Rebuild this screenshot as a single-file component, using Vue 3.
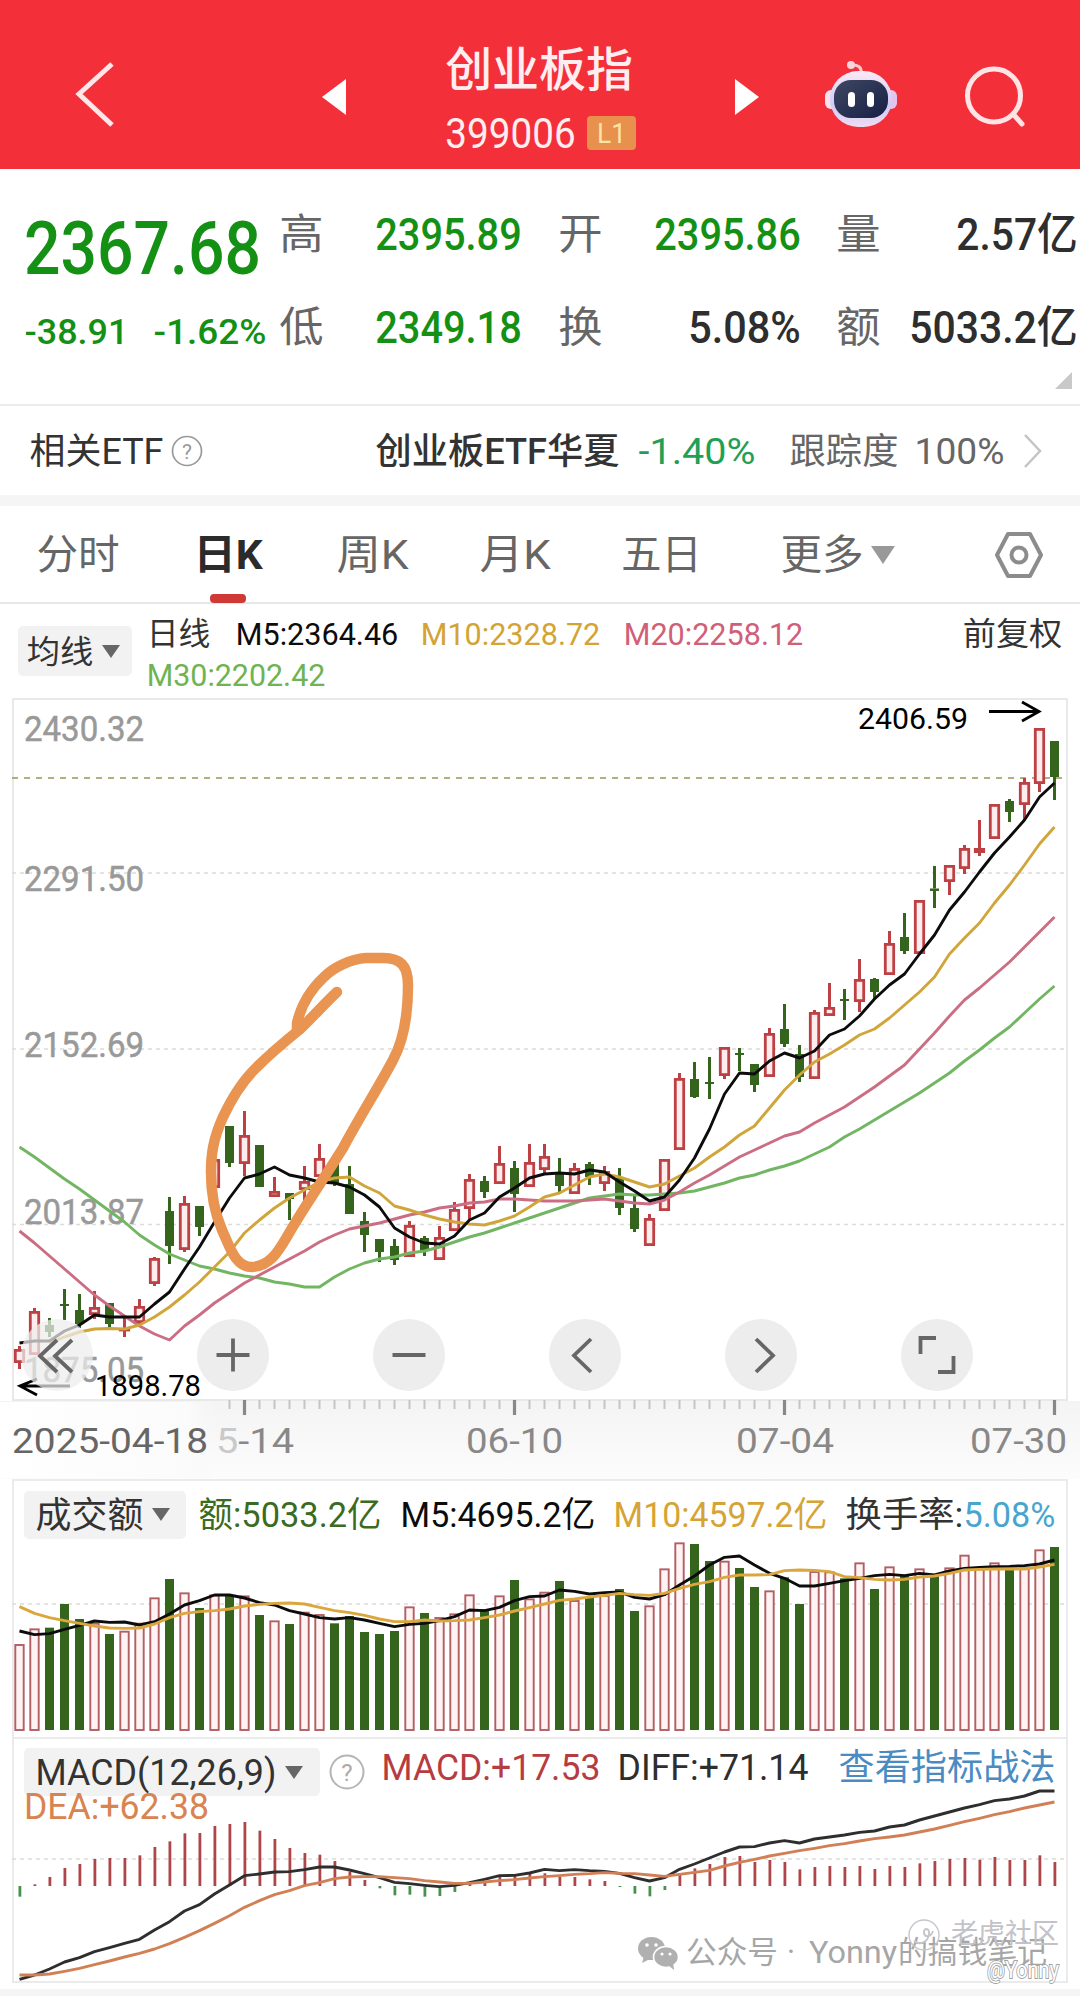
<template>
  <div class="page">
    <header class="topbar">
      <svg class="topbar__back" width="50" height="70" viewBox="0 0 50 70">
        <path d="M42 5 9 35l33 31" />
      </svg>
      <svg class="topbar__arrow" width="24" height="36" viewBox="0 0 24 36"><path d="M24 0v36L0 18z" /></svg>
      <div class="topbar__title">
        <FitText text="创业板指" :w="184" :size="47" class="medium" />
        <div class="topbar__code">
          <FitText text="399006" :w="127" :size="42" />
          <span class="badge"><FitText text="L1" :w="27" :size="28" /></span>
        </div>
      </div>
      <svg class="topbar__arrow topbar__arrow--next" width="24" height="36" viewBox="0 0 24 36"><path d="M0 0v36l24-18z" /></svg>
      <svg class="topbar__robot" width="72" height="70" viewBox="0 0 72 70">
        <defs>
          <linearGradient id="shell" x1="0" y1="0" x2="0" y2="1">
            <stop offset="0" stop-color="#fbe9f5" />
            <stop offset="0.6" stop-color="#cfcaf8" />
            <stop offset="1" stop-color="#eedcf2" />
          </linearGradient>
          <linearGradient id="visor" x1="0" y1="0" x2="1" y2="1">
            <stop offset="0" stop-color="#3f4763" />
            <stop offset="1" stop-color="#172044" />
          </linearGradient>
        </defs>
        <path d="M36 13c1-6-3-8-9-8" fill="none" stroke="#fbc9d3" stroke-width="3" />
        <circle cx="26" cy="5" r="4" fill="#fbd3dc" />
        <rect x="0" y="30" width="14" height="19" rx="6" fill="#f6e1ef" />
        <rect x="58" y="30" width="14" height="19" rx="6" fill="#e3c4ea" />
        <rect x="5" y="11" width="62" height="56" rx="28" fill="url(#shell)" />
        <rect x="9" y="20" width="54" height="38" rx="17" fill="url(#visor)" />
        <rect x="23" y="32" width="7" height="15" rx="3.5" fill="#fff" />
        <rect x="42" y="32" width="7" height="15" rx="3.5" fill="#fff" />
      </svg>
      <svg class="topbar__search" width="62" height="62" viewBox="0 0 62 62">
        <circle cx="29" cy="30.5" r="26.5" />
        <path d="m48 49 9 10" />
      </svg>
    </header>

    <section class="quote">
      <div class="quote__main">
        <div class="quote__price"><FitText text="2367.68" :w="231" :size="75" class="medium" /></div>
        <div class="quote__change">
          <FitText text="-38.91" :w="101" :size="35" class="medium" />
          <FitText text="-1.62%" :w="110" :size="35" class="medium" />
        </div>
      </div>
      <div class="quote__grid">
        <template v-for="s in stats" :key="s.label">
          <FitText class="quote__label" :text="s.label" :w="41" :size="42" />
          <FitText class="quote__value medium" :class="{ down: s.down }" :text="s.value" :w="s.w" :size="44" />
        </template>
      </div>
      <i class="quote__corner"></i>
    </section>

    <section class="etf">
      <FitText text="相关ETF" :w="131" :size="36" />
      <svg class="etf__help" width="32" height="32" viewBox="0 0 32 32">
        <circle cx="16" cy="16" r="14.5" fill="none" stroke="#999" stroke-width="1.7" />
        <text x="16" y="23.5" text-anchor="middle" font-size="21" fill="#999">?</text>
      </svg>
      <FitText class="etf__name medium" text="创业板ETF华夏" :w="241" :size="36" />
      <FitText class="etf__pct" text="-1.40%" :w="114" :size="37" />
      <FitText class="etf__track" text="跟踪度" :w="106" :size="36" />
      <FitText class="etf__full" text="100%" :w="87" :size="36" />
      <svg class="etf__more" width="18" height="34" viewBox="0 0 18 34"><path d="m1 1 15 16L1 33" /></svg>
    </section>

    <nav class="tabs">
      <div v-for="t in tabs" :key="t.text" class="tabs__item" :class="{ 'tabs__item--on': t.on }">
        <FitText :text="t.text" :w="t.w" :size="41" />
      </div>
      <i class="tabs__caret"></i>
      <svg class="tabs__gear" width="50" height="48" viewBox="0 0 50 48">
        <path d="M14 3h22l11 21-11 21H14L3 24z" />
        <circle cx="25" cy="24" r="7.5" />
      </svg>
    </nav>

    <section class="ma">
      <div class="pick ma__pick">
        <FitText text="均线" :w="64" :size="32" />
        <i class="caret"></i>
      </div>
      <div class="ma__legend">
        <FitText text="日线" :w="61" :size="32" class="ink" />
        <FitText class="ma__m5" text="M5:2364.46" :w="160" :size="32" />
        <FitText class="ma__m10" text="M10:2328.72" :w="177" :size="32" />
        <FitText class="ma__m20" text="M20:2258.12" :w="177" :size="32" />
        <FitText class="ma__adj ink" text="前复权" :w="97" :size="32" />
      </div>
      <FitText class="ma__m30" text="M30:2202.42" :w="176" :size="32" />
    </section>

    <!-- K line -->
    <svg class="kline" width="1080" height="781" viewBox="0 698 1080 781">
      <defs>
        <linearGradient id="axis" x1="0" y1="0" x2="0" y2="1">
          <stop offset="0" stop-color="#f4f4f4" />
          <stop offset="1" stop-color="#fcfcfc" />
        </linearGradient>
        <linearGradient id="fade" x1="0" y1="0" x2="1" y2="0">
          <stop offset="0" stop-color="#fff" />
          <stop offset="0.88" stop-color="#fbfbfb" />
          <stop offset="1" stop-color="#f8f8f8" stop-opacity="0" />
        </linearGradient>
      </defs>
      <rect x="13" y="699" width="1054" height="701" fill="#fff" stroke="#e9e9e9" stroke-width="2" />
      <path v-for="y in [873, 1049, 1224.5]" :key="y" class="grid" :d="`M12 ${y}H1066`" />
      <path d="M12 778H1062" stroke="#9a9558" stroke-width="1.6" stroke-dasharray="6 6" />

      <g class="scale">
        <text v-for="l in scale" :key="l.t" x="24" :y="l.y" textLength="120" lengthAdjust="spacingAndGlyphs">{{ l.t }}</text>
      </g>

      <g v-for="(c, i) in candles" :key="i" :class="c[0] === 'r' ? 'rise' : 'fall'">
        <path :d="`M${px(i)} ${c[1]}V${c[2]}M${px(i)} ${c[3]}V${c[4]}`" stroke-width="3" />
        <rect v-if="c[0] === 'r'" :x="px(i) - 4.2" :y="c[2] + 1.4" width="8.4" :height="Math.max(c[3] - c[2] - 2.8, 0.6)" stroke-width="2.8" />
        <rect v-else :x="px(i) - 4.5" :y="c[2]" width="9" :height="c[3] - c[2]" />
      </g>

      <polyline class="line" :points="line(ma30)" stroke="#72b562" />
      <polyline class="line" :points="line(ma20)" stroke="#cb6d83" />
      <polyline class="line" :points="line(ma10, 2)" stroke="#d0a53a" />
      <polyline class="line" :points="line(ma5)" stroke="#0c0c0c" />

      <path class="arrow" d="M989 711.5h50M1022 702l17 9.500-17 9.500M20 1386h50M37 1379l-17 7 17 9" />
      <text class="extreme" x="858" y="729" textLength="110" lengthAdjust="spacingAndGlyphs">2406.59</text>

      <g v-for="(b, i) in controls" :key="b" :transform="`translate(${57 + i * 176} 1355)`">
        <circle r="36" fill="#ededed" :opacity="i ? 1 : 0.72" />
        <path :d="b" fill="none" stroke="#666" stroke-width="3.8" />
      </g>
      <text class="extreme" x="95" y="1396" textLength="106" lengthAdjust="spacingAndGlyphs">1898.78</text>

      <!-- hand-drawn mark -->
      <path
        d="M337 992C326 1002 310 1020 299 1030C283 1043 269 1055 257 1067C240 1083 230 1102 223 1117C213 1139 211 1155 211 1172C211 1197 216 1216 222 1230C230 1247 235 1267 252 1267C271 1266 279 1250 288 1235C302 1210 325 1177 343 1148C360 1116 380 1085 393 1060C405 1038 408 1012 408 985C408 965 400 958 383 958H366C350 959 333 968 324 977C311 989 301 1006 297 1023V1031"
        fill="none" stroke="#e99451" stroke-width="10.5" stroke-linecap="round" stroke-linejoin="round"
      />

      <rect x="0" y="1401" width="1080" height="78" fill="url(#axis)" />
      <path v-for="i in ticks" :key="i" :d="`M${px(i)} 1400V${isMajor(i) ? 1415 : 1409}`" :stroke="isMajor(i) ? '#888' : '#c4c4c4'" :stroke-width="isMajor(i) ? 3.2 : 2" />
      <g class="dates">
        <text x="216" y="1453" textLength="78" lengthAdjust="spacingAndGlyphs"><tspan fill="#c9c9c9">5</tspan>-14</text>
        <text x="466" y="1453" textLength="97" lengthAdjust="spacingAndGlyphs">06-10</text>
        <text x="736" y="1453" textLength="98" lengthAdjust="spacingAndGlyphs">07-04</text>
        <text x="970" y="1453" textLength="97" lengthAdjust="spacingAndGlyphs">07-30</text>
        <rect x="0" y="1402" width="214" height="76" fill="url(#fade)" />
        <text x="12" y="1453" textLength="196" lengthAdjust="spacingAndGlyphs" fill="#666">2025-04-18</text>
      </g>
    </svg>

    <!-- turnover -->
    <section class="panel panel--vol">
      <div class="panel__head">
        <div class="pick vol__pick">
          <FitText text="成交额" :w="105" :size="36" />
          <i class="caret"></i>
        </div>
        <FitText class="vol__now" text="额:5033.2亿" :w="180" :size="35" />
        <FitText class="vol__m5" text="M5:4695.2亿" :w="192" :size="35" />
        <FitText class="vol__m10" text="M10:4597.2亿" :w="211" :size="35" />
        <FitText class="vol__rate ink" text="换手率:" :w="115" :size="35" />
        <FitText class="vol__pct" text="5.08%" :w="89" :size="35" />
      </div>
      <svg class="panel__svg" width="1054" height="196" viewBox="13 1540 1054 196">
        <path class="grid" d="M12 1604H1066" />
        <g v-for="(v, i) in volumes" :key="i">
          <rect v-if="candles[i][0] === 'r'" :x="px(i) - 4.2" :y="volY(v) + 1" width="8.4" :height="1729 - volY(v)" fill="#fff3f3" stroke="#b25f64" stroke-width="1.9" />
          <rect v-else :x="px(i) - 4.5" :y="volY(v)" width="9" :height="1730 - volY(v)" fill="#35651d" />
        </g>
        <polyline class="line" :points="line(volMa5.map(volY))" stroke="#0c0c0c" />
        <polyline class="line" :points="line(volMa10.map(volY))" stroke="#dba73d" />
      </svg>
    </section>

    <!-- MACD -->
    <section class="panel panel--macd">
      <div class="panel__head macd__head">
        <div class="pick macd__pick">
          <FitText text="MACD(12,26,9)" :w="238" :size="36" />
          <i class="caret"></i>
        </div>
        <svg class="macd__help" width="36" height="36" viewBox="0 0 36 36">
          <circle cx="18" cy="18" r="16.5" fill="none" stroke="#b5b5b5" stroke-width="2" />
          <text x="18" y="26.500" text-anchor="middle" font-size="24" fill="#aaa">?</text>
        </svg>
        <FitText class="macd__val" text="MACD:+17.53" :w="216" :size="36" />
        <FitText class="macd__diff" text="DIFF:+71.14" :w="188" :size="36" />
        <FitText class="macd__link" text="查看指标战法" :w="214" :size="36" />
      </div>
      <svg class="panel__svg" width="1054" height="186" viewBox="13 1795 1054 186">
        <path class="grid" d="M12 1859H1066" />
        <path v-for="(v, i) in macd" :key="i" :d="`M${px(i) + 0.4} 1886V${macdY(v)}`" :stroke="v > 468 ? '#47914a' : '#ad4549'" stroke-width="2.800" />
        <polyline class="line" :points="line(diff.map(macdY))" stroke="#2e2e2e" />
        <polyline class="line" :points="line(dea.map(macdY))" stroke="#d17f55" />
        <text class="dea" x="24" y="1819" textLength="185" lengthAdjust="spacingAndGlyphs">DEA:+62.38</text>

        <g fill="#b0b0b0">
          <ellipse cx="651.5" cy="1948.500" rx="13.5" ry="11.5" />
          <path d="m644 1956-2 7 8-4z" />
          <ellipse cx="666" cy="1957" rx="12.500" ry="10.500" stroke="#fff" stroke-width="1.600" />
          <path d="m668 1965 6 5-1-8z" />
        </g>
        <g fill="#fff">
          <circle cx="647" cy="1945" r="1.800" />
          <circle cx="656" cy="1945" r="1.800" />
          <circle cx="662" cy="1954" r="1.600" />
          <circle cx="670" cy="1954" r="1.600" />
        </g>
        <g class="mark" font-size="31">
          <text x="686" y="1963" textLength="92" lengthAdjust="spacingAndGlyphs">公众号</text>
          <text x="787" y="1963">·</text>
          <text x="809" y="1963" textLength="88" lengthAdjust="spacingAndGlyphs">Yonny</text>
          <text x="898" y="1963" textLength="149" lengthAdjust="spacingAndGlyphs">的搞钱笔记</text>
        </g>
        <g class="mark mark--light">
          <circle cx="924" cy="1935" r="15" fill="none" stroke="#c6c6cc" stroke-width="1.400" />
          <path d="M914 1941c6 5 14 1 15-7 1-7-6-6-5-1s7 4 9-2" fill="none" stroke="#c6c6cc" stroke-width="2" />
          <text x="951" y="1943" font-size="27" textLength="108" lengthAdjust="spacingAndGlyphs">老虎社区</text>
          <text class="mark__author" x="987" y="1978" font-size="23" textLength="72" lengthAdjust="spacingAndGlyphs">@Yonny</text>
        </g>
      </svg>
    </section>
  </div>
</template>

<script setup>
import { h } from 'vue';

// single line of text squeezed to a given width
const FitText = (props) => {
  const pad = props.size * 0.04;
  return h(
    'svg',
    { class: 'fit', width: props.w, height: props.size },
    [
      h(
        'text',
        {
          x: -pad,
          y: props.size * 0.86,
          'font-size': props.size,
          fill: 'currentColor',
          textLength: props.w + pad * 2,
          lengthAdjust: 'spacingAndGlyphs'
        },
        props.text
      )
    ]
  );
};
FitText.props = ['text', 'w', 'size'];

const stats = [
  { label: '高', value: '2395.89', w: 143, down: true },
  { label: '开', value: '2395.86', w: 143, down: true },
  { label: '量', value: '2.57亿', w: 118 },
  { label: '低', value: '2349.18', w: 143, down: true },
  { label: '换', value: '5.08%', w: 109 },
  { label: '额', value: '5033.2亿', w: 165 }
];

const tabs = [
  { text: '分时', w: 80 },
  { text: '日K', w: 66, on: true },
  { text: '周K', w: 69 },
  { text: '月K', w: 68 },
  { text: '五日', w: 77 },
  { text: '更多', w: 80 }
];

const scale = [
  { t: '2430.32', y: 741 },
  { t: '2291.50', y: 891 },
  { t: '2152.69', y: 1057 },
  { t: '2013.87', y: 1224 },
  { t: '1875.05', y: 1382 }
];

const controls = [
  'M15-15-2 1l17 16M0-15-17 1 0 17',
  'M-16.5 0h33M0-16.500v33',
  'M-16.500 0h33',
  'M6-16-11 .5 6 17',
  'M-5-16 12 .5-5 17',
  'M-1-17h-15.500v16M16.500 1v16H1'
];

// [type, high, bodyTop, bodyBottom, low]
const candles = [
  ['r', 1346, 1349, 1363, 1369], ['r', 1308, 1311, 1355, 1355], ['g', 1318, 1325, 1332, 1337],
  ['g', 1289, 1304, 1306, 1320], ['g', 1294, 1310, 1324, 1328], ['r', 1291, 1307, 1315, 1319],
  ['g', 1303, 1303, 1324, 1328], ['r', 1317, 1328, 1331, 1337], ['r', 1299, 1306, 1323, 1324],
  ['r', 1257, 1258, 1284, 1286], ['g', 1197, 1211, 1246, 1264], ['r', 1196, 1203, 1250, 1252],
  ['g', 1206, 1206, 1227, 1236], ['r', 1159, 1159, 1188, 1188], ['g', 1126, 1126, 1163, 1167],
  ['r', 1111, 1135, 1164, 1176], ['g', 1145, 1145, 1187, 1187], ['r', 1177, 1191, 1197, 1197],
  ['g', 1193, 1193, 1199, 1220], ['r', 1166, 1181, 1190, 1203], ['r', 1144, 1158, 1177, 1178],
  ['g', 1159, 1159, 1183, 1186], ['g', 1166, 1184, 1214, 1214], ['g', 1212, 1221, 1235, 1252],
  ['g', 1239, 1239, 1252, 1262], ['g', 1239, 1246, 1260, 1265], ['r', 1221, 1225, 1257, 1257],
  ['g', 1236, 1238, 1251, 1256], ['r', 1226, 1237, 1260, 1260], ['r', 1202, 1209, 1231, 1231],
  ['r', 1174, 1179, 1209, 1220], ['g', 1176, 1181, 1192, 1198], ['r', 1146, 1163, 1184, 1184],
  ['g', 1161, 1168, 1194, 1212], ['r', 1144, 1162, 1187, 1187], ['r', 1144, 1156, 1170, 1175],
  ['g', 1158, 1173, 1186, 1194], ['r', 1163, 1168, 1194, 1194], ['g', 1162, 1164, 1177, 1185],
  ['r', 1166, 1171, 1184, 1191], ['g', 1168, 1178, 1208, 1215], ['g', 1196, 1208, 1229, 1232],
  ['r', 1214, 1218, 1246, 1246], ['r', 1159, 1159, 1211, 1211], ['r', 1073, 1078, 1150, 1150],
  ['g', 1062, 1079, 1097, 1098], ['g', 1057, 1082, 1084, 1099], ['r', 1047, 1047, 1076, 1079],
  ['g', 1048, 1053, 1055, 1071], ['g', 1064, 1064, 1085, 1092], ['r', 1028, 1033, 1077, 1077],
  ['g', 1004, 1029, 1044, 1047], ['g', 1045, 1054, 1077, 1082], ['r', 1010, 1012, 1079, 1079],
  ['r', 983, 1007, 1016, 1016], ['g', 989, 999, 1001, 1020], ['r', 959, 979, 1002, 1012],
  ['g', 978, 979, 992, 999], ['r', 931, 943, 975, 975], ['g', 913, 937, 951, 954],
  ['r', 900, 900, 954, 954], ['g', 866, 888.5, 891, 908], ['r', 865, 865, 882, 895],
  ['r', 845, 848, 869, 874], ['r', 820, 848, 853, 856], ['r', 804, 804, 839, 839],
  ['g', 799, 801, 812, 822], ['r', 778, 782, 805, 820], ['r', 728, 728, 784, 792],
  ['g', 741, 741, 777, 800]
];

const ma5 = [
  1343, 1341, 1341, 1331, 1325, 1315, 1317, 1317, 1317, 1304, 1292, 1269, 1247, 1222, 1198, 1178, 1174, 1167, 1175, 1178,
  1182, 1183, 1187, 1195, 1207, 1228, 1237, 1243, 1244, 1236, 1220, 1213, 1197, 1188, 1178, 1174, 1173, 1174, 1170, 1172,
  1182, 1191, 1201, 1197, 1180, 1158, 1129, 1094, 1073, 1074, 1061, 1053, 1058, 1051, 1035, 1029, 1016, 999, 985, 974,
  954, 935, 910, 892, 872, 853, 837, 820, 797, 783
];
const ma10 = [
  1343, 1337, 1332, 1329, 1328.5, 1329, 1325, 1317, 1307, 1295, 1282, 1267, 1252, 1233, 1220, 1208, 1198, 1190,
  1182, 1178, 1177, 1186, 1193, 1206, 1210, 1215, 1219, 1222, 1224, 1225, 1221, 1216, 1207, 1197, 1193, 1185, 1177, 1174,
  1177, 1182, 1187, 1184, 1176, 1168, 1157, 1147, 1135, 1126, 1108, 1090, 1075, 1062, 1054, 1045, 1035, 1029, 1018, 1005,
  992, 977, 954, 938, 923, 903, 885, 865, 844, 827
];
const ma20 = [
  1231, 1243, 1256, 1269, 1282, 1295, 1306, 1316, 1326, 1334, 1340, 1326, 1315, 1303, 1293, 1283, 1275, 1267, 1259, 1251,
  1242, 1235, 1229, 1226, 1223, 1219, 1215, 1212, 1208, 1206, 1203, 1202, 1199, 1199, 1200, 1201, 1201, 1201, 1200, 1199,
  1201, 1203, 1204, 1200, 1192, 1183, 1175, 1166, 1157, 1150, 1143, 1136, 1132, 1123, 1115, 1107, 1097, 1087, 1076, 1065,
  1049, 1033, 1016, 1000, 988, 975, 962, 947, 932, 917
];
const ma30 = [
  1147, 1157, 1168, 1179, 1189, 1200, 1211, 1222, 1235, 1245, 1254, 1260, 1266, 1269, 1273, 1276, 1278, 1282, 1284, 1287,
  1287, 1277, 1269, 1263, 1259, 1257, 1253, 1251, 1247, 1242, 1237, 1233, 1228, 1223, 1218, 1213, 1208, 1203, 1198, 1196,
  1194, 1195, 1195, 1194, 1193, 1191, 1187, 1183, 1178, 1175, 1170, 1166, 1161, 1154, 1147, 1137, 1129, 1120, 1111, 1102,
  1093, 1083, 1073, 1061, 1050, 1038, 1027, 1013, 999, 986
];

const volumes = [
  522, 475, 473, 402, 447, 458, 492, 482, 458, 382, 327, 367, 414, 373, 376, 376, 435, 451, 462, 425,
  432, 460, 438, 486, 492, 483, 409, 429, 441, 430, 373, 418, 376, 330, 385, 365, 333, 390, 380, 375,
  357, 423, 406, 295, 217, 222, 273, 272, 294, 351, 361, 322, 402, 303, 304, 325, 277, 357, 289, 315,
  295, 315, 292, 254, 295, 277, 300, 292, 238, 231
];
const volMa5 = [
  483, 494, 491, 478, 466, 453, 457, 456, 465, 455, 432, 405, 392, 375, 375, 384, 398, 405, 422, 432,
  443, 447, 443, 450, 460, 470, 463, 460, 452, 440, 420, 422, 412, 392, 380, 378, 360, 364, 372, 368,
  366, 382, 387, 374, 345, 318, 285, 262, 258, 285, 310, 325, 348, 348, 340, 332, 325, 317, 313, 317,
  310, 315, 303, 295, 292, 290, 289, 287, 282, 270
];
const volMa10 = [
  410, 430, 443, 452, 460, 468, 474, 475, 474, 462, 443, 430, 425, 422, 417, 408, 403, 400, 399, 402,
  412, 422, 428, 436, 447, 455, 455, 450, 453, 452, 450, 443, 435, 423, 413, 402, 391, 387, 381, 376,
  370, 374, 376, 370, 355, 343, 335, 322, 315, 315, 314, 302, 300, 301, 305, 320, 323, 328, 330, 328,
  321, 318, 310, 300, 298, 297, 297, 297, 291, 283
];

const macd = [
  500, 463, 441, 414, 402, 387, 384, 384, 376, 351, 334, 310, 309, 288, 282, 276, 302, 327, 354, 369,
  374, 393, 425, 450, 475, 496, 494, 500, 498, 486, 462, 455, 440, 437, 432, 430, 440, 441, 448, 453,
  471, 491, 499, 480, 435, 415, 402, 381, 378, 396, 390, 396, 418, 411, 408, 411, 408, 417, 408, 411,
  400, 393, 387, 384, 389, 381, 390, 390, 376, 396
];
const diff = [
  748, 735, 717, 696, 683, 665, 653, 640, 628, 600, 575, 543, 524, 492, 465, 437, 432, 426, 425, 419,
  411, 411, 420, 431, 443, 457, 461, 466, 470, 466, 458, 448, 437, 436, 429, 418, 422, 419, 422, 424,
  430, 443, 453, 443, 418, 402, 384, 366, 351, 350, 339, 332, 339, 327, 321, 315, 307, 303, 291, 285,
  270, 258, 246, 234, 224, 212, 207, 198, 183, 183
];
const dea = [
  735, 735, 732, 724, 715, 704, 693, 681, 670, 657, 641, 622, 602, 580, 557, 532, 512, 494, 482, 467,
  458, 446, 441, 440, 440, 443, 446, 452, 456, 460, 460, 456, 452, 449, 444, 440, 437, 433, 431, 428,
  430, 431, 435, 439, 433, 427, 421, 408, 397, 388, 378, 370, 362, 355, 347, 341, 333, 326, 321, 315,
  306, 297, 286, 275, 265, 254, 245, 234, 225, 216
];

const px = (i) => 19.5 + i * 15;
const volY = (v) => 1470 + v / 3;
const macdY = (v) => 1730 + v / 3;
const line = (ys, from = 0) => ys.map((y, i) => `${px(i + from)},${y}`).join(' ');

const ticks = Array.from({ length: 56 }, (_, i) => i + 14);
const isMajor = (i) => (i - 15) % 18 === 0;
</script>

<style>
body {
  background: #fff;
}
</style>

<style scoped>
.page {
  width: 1080px;
  height: 1996px;
  overflow: hidden;
  background: #fff;
  color: #333;
  font-family: Roboto, "Noto Sans CJK SC", sans-serif;
  display: flex;
  flex-direction: column;
}

.page > * {
  flex-shrink: 0;
  box-sizing: border-box;
}

.fit {
  display: block;
  flex-shrink: 0;
  overflow: visible;
}

.medium {
  font-weight: 500;
}

.ink {
  color: #333;
}

/* header */
.topbar {
  height: 169px;
  display: flex;
  align-items: flex-start;
  background: #f3303a;
  color: #ffeef0;
}

.topbar__back {
  margin: 59px 0 0 70px;
  fill: none;
  stroke: #ffe6e8;
  stroke-width: 5;
}

.topbar__arrow {
  margin: 79px 0 0 202px;
  fill: #fff;
}

.topbar__title {
  width: 190px;
  margin: 46px 0 0 101px;
}

.topbar__code {
  display: flex;
  align-items: center;
  gap: 13px;
  margin-top: 19px;
}

.badge {
  width: 49px;
  height: 34px;
  border-radius: 4px;
  background: #e8904d;
  color: #fde3a5;
  display: flex;
  align-items: center;
  justify-content: center;
}

.topbar__arrow--next {
  margin-left: 98px;
}

.topbar__robot {
  margin: 60px 0 0 66px;
}

.topbar__search {
  margin: 65px 0 0 67.500px;
  fill: none;
  stroke: #ffe4e6;
  stroke-width: 5;
  stroke-linecap: round;
}

/* quote */
.quote {
  position: relative;
  height: 235px;
  display: flex;
  padding-left: 26px;
}

.quote__main {
  width: 217px;
  padding-top: 35px;
  color: #149014;
}

.quote__price,
.quote__change {
  height: 85px;
  display: flex;
  align-items: center;
}

.quote__price {
  padding-left: 1px;
}

.quote__change {
  gap: 28px;
}

.quote__grid {
  display: grid;
  grid-template-columns: 79px 198px 81px 198px 80px 197px;
  grid-template-rows: 93px 93px;
  align-items: center;
  padding-top: 18px;
}

.quote__label {
  justify-self: end;
  color: #666;
}

.quote__value {
  justify-self: end;
  color: #2e2e2e;
}

.quote__value.down {
  color: #149014;
}

.quote__corner {
  position: absolute;
  right: 8px;
  bottom: 15px;
  border-left: 17px solid transparent;
  border-bottom: 17px solid #c9c9c9;
}

/* related ETF */
.etf {
  height: 102px;
  border-top: 2px solid #ededed;
  border-bottom: 11px solid #f5f5f5;
  display: flex;
  align-items: center;
  padding-left: 31px;
}

.etf__help {
  margin-left: 9px;
}

.etf__name {
  margin-left: 174px;
}

.etf__pct {
  margin-left: 22px;
  color: #1fa055;
}

.etf__track {
  margin-left: 37px;
  color: #666;
}

.etf__full {
  margin-left: 19px;
  color: #666;
}

.etf__more {
  margin-left: 21px;
  fill: none;
  stroke: #c4c4c4;
  stroke-width: 2.500;
}

/* tabs */
.tabs {
  height: 98px;
  display: flex;
  align-items: stretch;
  padding: 1px 0 0 38px;
  border-bottom: 2px solid #e8e8e8;
  color: #666;
}

.tabs__item {
  position: relative;
  display: flex;
  align-items: center;
  margin-right: 74px;
}

.tabs__item:nth-child(1),
.tabs__item:nth-child(2) {
  margin-right: 77px;
}

.tabs__item:nth-child(5) {
  margin-right: 82px;
}

.tabs__item:nth-child(6) {
  margin-right: 9px;
}

.tabs__item--on {
  color: #2b2b2b;
  font-weight: 700;
}

.tabs__item--on::after {
  content: '';
  position: absolute;
  left: 15px;
  bottom: -1px;
  width: 36px;
  height: 9px;
  border-radius: 4px;
  background: #cf3a37;
}

.tabs__caret {
  align-self: center;
  border: 12px solid transparent;
  border-top: 18px solid #999;
  border-bottom: 0;
}

.tabs__gear {
  align-self: center;
  margin-left: 99px;
  fill: none;
  stroke: #8c8c8c;
  stroke-width: 4;
  stroke-linejoin: round;
}

/* moving averages */
.ma {
  height: 94px;
  display: grid;
  grid-template-columns: 148px 1fr;
  grid-template-rows: 38px 44px;
  padding-top: 10px;
  align-items: center;
}

.pick {
  display: flex;
  align-items: center;
  border-radius: 5px;
  background: #f2f2f2;
  color: #333;
  box-sizing: border-box;
}

.caret {
  border: 9.500px solid transparent;
  border-top: 13px solid #666;
  border-bottom: 0;
}

.ma__pick {
  grid-row: 1 / 3;
  align-self: start;
  width: 114px;
  height: 50px;
  margin: 12px 0 0 18px;
  padding-left: 9.500px;
  gap: 10px;
}

.ma__legend {
  display: flex;
  align-items: center;
}

.ma__m5 {
  margin-left: 28px;
  color: #0c0c0c;
}

.ma__m10 {
  margin-left: 25px;
  color: #d3a334;
}

.ma__m20 {
  margin-left: 26px;
  color: #cf6078;
}

.ma__adj {
  margin-left: 162px;
}

.ma__m30 {
  color: #6fb352;
}

/* charts */
.kline {
  display: block;
}

.grid {
  stroke: #dcdcdc;
  stroke-width: 1.500;
  stroke-dasharray: 4 4;
}

.line {
  fill: none;
  stroke-width: 2.900;
  stroke-linejoin: round;
}

.rise {
  fill: #ffecec;
  stroke: #bd4144;
}

.fall path {
  stroke: #35651d;
}

.fall rect {
  fill: #35651d;
}

.scale {
  font-size: 35px;
  fill: #999;
  stroke: #999;
  stroke-width: 0.5;
}

.extreme {
  font-size: 30px;
  fill: #000;
}

.arrow {
  fill: none;
  stroke: #000;
  stroke-width: 2.800;
}

.dates {
  font-size: 35px;
  fill: #888;
}

.panel {
  margin: 0 12px;
  border: 2px solid #ebebeb;
  background: #fff;
}

.panel--vol {
  height: 258px;
  border-bottom: 0;
}

.panel--macd {
  height: 246px;
}

.panel__head {
  height: 59px;
  display: flex;
  align-items: center;
  padding: 8px 0 0 10px;
  box-sizing: border-box;
}

.panel__svg {
  display: block;
  overflow: visible;
  margin-left: -1px;
}

.panel__head .pick {
  height: 48px;
  padding-left: 13px;
  gap: 10px;
  flex-shrink: 0;
}

.vol__pick {
  width: 162px;
}

.vol__now {
  margin-left: 14px;
  color: #3a6b22;
}

.vol__m5 {
  margin-left: 22px;
  color: #0c0c0c;
}

.vol__m10 {
  margin-left: 21px;
  color: #d6a436;
}

.vol__rate {
  margin-left: 21px;
}

.vol__pct {
  margin-left: 3px;
  color: #48a5cf;
}

.panel__head.macd__head {
  height: 56px;
  padding-top: 10px;
}

.macd__pick {
  width: 296px;
}

.macd__help {
  margin-left: 9px;
  flex-shrink: 0;
}

.macd__val,
.macd__diff,
.macd__link {
  margin-bottom: 10px;
}

.macd__val {
  margin-left: 18px;
  color: #b73c42;
}

.macd__diff {
  margin-left: 20px;
  color: #2e2e2e;
}

.macd__link {
  margin-left: 33px;
  color: #4a8cc2;
}

.dea {
  font-size: 36px;
  fill: #d98450;
}

.mark {
  fill: #a6a6a6;
}

.mark--light {
  fill: #c2c2c8;
}

.mark__author {
  fill: #fff;
  stroke: #a2a2a2;
  stroke-width: 1.800;
  paint-order: stroke;
}

.page::after {
  content: '';
  flex: 1;
  margin-top: 6px;
  background: #f5f5f5;
}
</style>
